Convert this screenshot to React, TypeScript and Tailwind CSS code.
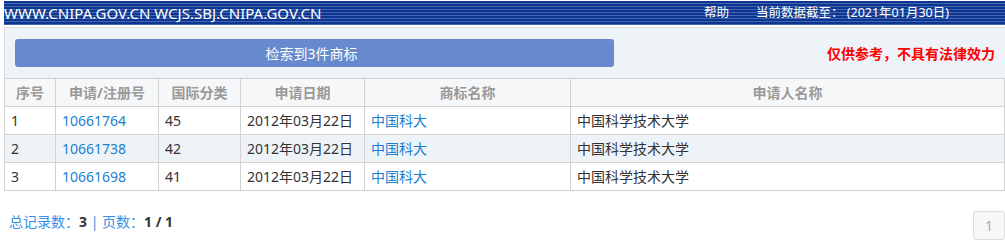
const rows = [
  { no: '1', reg: '10661764', cls: '45', date: '2012年03月22日', name: '中国科大', applicant: '中国科学技术大学' },
  { no: '2', reg: '10661738', cls: '42', date: '2012年03月22日', name: '中国科大', applicant: '中国科学技术大学' },
  { no: '3', reg: '10661698', cls: '41', date: '2012年03月22日', name: '中国科大', applicant: '中国科学技术大学' },
];

const headers = ['序号', '申请/注册号', '国际分类', '申请日期', '商标名称', '申请人名称'];

export default function App() {
  return (
    <div
      className="w-[1005px] h-[243px] bg-white pl-[4px] pt-[1px] text-[14px] overflow-hidden"
      style={{ fontFamily: '"Noto Sans", "Noto Sans CJK SC", sans-serif' }}
    >
      {/* top bar */}
      <div className="w-[1001px] h-[24px] flex items-center text-white bg-[repeating-linear-gradient(to_bottom,#0b3590_0px,#0b3590_2px,#4567b0_2px,#4567b0_3px)]">
        <span className="w-[700px] text-[15px] leading-none whitespace-nowrap">WWW.CNIPA.GOV.CN WCJS.SBJ.CNIPA.GOV.CN</span>
        <span className="w-[52px] text-[12.5px]">帮助</span>
        <span className="text-[12.5px] whitespace-nowrap">当前数据截至： (2021年01月30日)</span>
      </div>

      <div className="mt-[2px] bg-[#eef3f8] border-l border-t border-[#dcdcdc] h-[51px] flex items-center pl-[10px] pr-[10px]">
        <div className="w-[599px] h-[28px] rounded-[3px] bg-[#6789cd] text-white flex items-center justify-center pr-[6px]">
          检索到3件商标
        </div>
        <div className="ml-auto font-bold text-[#ff0000]">仅供参考，不具有法律效力</div>
      </div>

      <table className="w-[1001px] table-fixed border-collapse">
        <colgroup>
          <col className="w-[51px]" />
          <col className="w-[103px]" />
          <col className="w-[82px]" />
          <col className="w-[124px]" />
          <col className="w-[206px]" />
          <col />
        </colgroup>
        <thead>
          <tr className="h-[28px] bg-[#f6f7f8]">
            {headers.map(h => (
              <th key={h} className="border border-[#d2d2d2] text-center font-bold text-[#999999] p-0">
                {h}
              </th>
            ))}
          </tr>
        </thead>
        <tbody>
          {rows.map((r, i) => (
            <tr key={r.no} className={`h-[28px] ${i === 1 ? 'bg-[#eef3f8]' : 'bg-white'}`}>
              <td className="border border-[#d2d2d2] px-[6px] text-[#333333]">{r.no}</td>
              <td className="border border-[#d2d2d2] px-[6px] text-[#1a7fcf]">{r.reg}</td>
              <td className="border border-[#d2d2d2] px-[6px] text-[#333333]">{r.cls}</td>
              <td className="border border-[#d2d2d2] px-[6px] text-[#333333]">{r.date}</td>
              <td className="border border-[#d2d2d2] px-[6px] text-[#1a7fcf]">{r.name}</td>
              <td className="border border-[#d2d2d2] px-[6px] text-[#333333]">{r.applicant}</td>
            </tr>
          ))}
        </tbody>
      </table>

      <div className="flex items-center mt-[20px] pl-[5px]">
        <div className="text-[#3a8ee6] -translate-y-[4px]">
          总记录数：<b className="text-[#333333]">3</b> | 页数：<b className="text-[#333333]">1 / 1</b>
        </div>
        <div className="ml-auto w-[32px] h-[29px] border border-[#dddddd] rounded-[3px] bg-[#f7f7f7] text-[#aaaaaa] flex items-center justify-center">
          1
        </div>
      </div>
    </div>
  );
}
